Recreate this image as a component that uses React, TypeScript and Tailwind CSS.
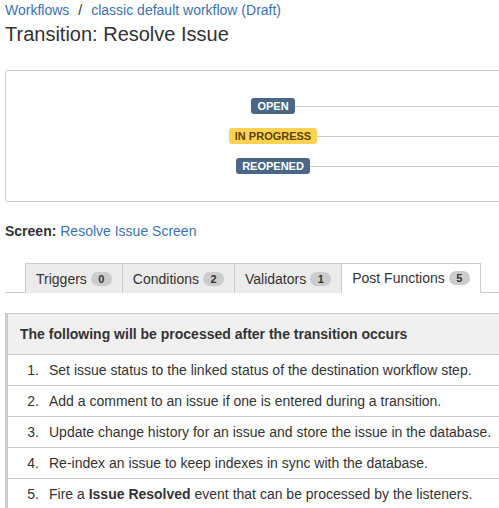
import React from 'react'

type Status = { name: string; tone: 'blue' | 'yellow' }

const statuses: Status[] = [
    { name: 'OPEN', tone: 'blue' },
    { name: 'IN PROGRESS', tone: 'yellow' },
    { name: 'REOPENED', tone: 'blue' },
]

const tabs = [
    { label: 'Triggers', count: 0 },
    { label: 'Conditions', count: 2 },
    { label: 'Validators', count: 1 },
    { label: 'Post Functions', count: 5, active: true },
]

const steps: React.ReactNode[] = [
    'Set issue status to the linked status of the destination workflow step.',
    'Add a comment to an issue if one is entered during a transition.',
    'Update change history for an issue and store the issue in the database.',
    'Re-index an issue to keep indexes in sync with the database.',
    <>Fire a <b className="font-bold">Issue Resolved</b> event that can be processed by the listeners.</>,
]

const App = () => {
    return (
        <div className="w-[499px] h-[508px] overflow-hidden bg-white text-[#333] text-[14px] leading-[20px] font-['Liberation_Sans',Arial,sans-serif]">
            <div className="w-[600px] pl-[5px]">
                {/* Breadcrumbs */}
                <div className="flex items-center text-[#3b73af]">
                    <a className="hover:underline">Workflows</a>
                    <span className="mx-[9px] text-[#333]">/</span>
                    <a className="hover:underline">classic default workflow (Draft)</a>
                </div>
                <h1 className="mt-[2px] text-[20px] leading-[24px] font-normal">Transition: Resolve Issue</h1>

                {/* Diagram */}
                <div className="mt-[24px] w-[536px] border border-[#ccc] rounded-[3px] py-[20px]">
                    {statuses.map((s) => (
                        <div key={s.name} className="grid grid-cols-[1fr_auto_1fr] items-center h-[30px]">
                            <div />
                            <span
                                className={`rounded-[3px] px-[6px] h-[16px] flex items-center text-[11px] leading-none font-bold uppercase ${s.tone === 'yellow'
                                        ? 'bg-[#ffd351] text-[#594300]'
                                        : 'bg-[#4a6785] text-white'
                                    }`}
                            >
                                {s.name}
                            </span>
                            <div className="h-px bg-[#ccc]" />
                        </div>
                    ))}
                </div>

                {/* Screen */}
                <div className="mt-[19px]">
                    <b className="font-bold">Screen:</b>{' '}
                    <a className="text-[#3b73af]">Resolve Issue Screen</a>
                </div>

                {/* Tabs */}
                <ul className="mt-[22px] flex pl-[20px] border-b border-[#ccc]">
                    {tabs.map((t, i) => (
                        <li
                            key={t.label}
                            className={`-mb-px flex items-center gap-[4px] px-[10px] py-[4px] border-t border-r border-[#ccc] ${i === 0 ? 'border-l' : ''} ${t.active ? 'bg-white border-b border-b-white' : 'bg-[#ebebeb]'
                                }`}
                        >
                            <span>{t.label}</span>
                            <span className="min-w-[21px] h-[14px] px-[7px] rounded-full bg-[#ccc] text-[#333] text-[11px] leading-[14px] font-bold text-center">
                                {t.count}
                            </span>
                        </li>
                    ))}
                </ul>

                {/* Post functions */}
                <div className="mt-[20px] border-l-[3px] border-[#ccc]">
                    <div className="border-t border-b border-[#ccc] bg-[#f0f0f0] pl-[12px] py-[10px] font-bold">
                        The following will be processed after the transition occurs
                    </div>
                    <ol>
                        {steps.map((step, i) => (
                            <li key={i} className="flex border-b border-[#ccc] py-[5px]">
                                <span className="w-[31px] text-right">{i + 1}.</span>
                                <span className="pl-[10px]">{step}</span>
                            </li>
                        ))}
                    </ol>
                </div>
            </div>
        </div>
    )
}

export default App
